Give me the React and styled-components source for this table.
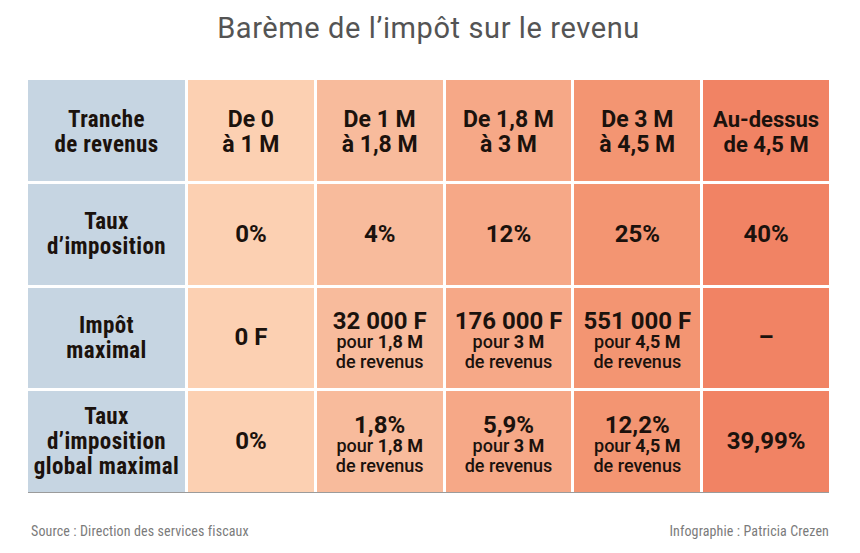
import React from 'react';
import styled, { createGlobalStyle } from 'styled-components';

const GlobalStyle = createGlobalStyle`
  body {
    margin: 0;
    background: #ffffff;
    font-family: "Roboto", "Liberation Sans", sans-serif;
  }
`;

const palette = ['#c6d5e2', '#fcd0b2', '#f8bb9c', '#f6a887', '#f39572', '#f18364'];

const Page = styled.div`
  width: 860px;
  height: 553px;
  box-sizing: border-box;
  padding: 11px 31px 0 28px;
  display: flex;
  flex-direction: column;
`;

const Title = styled.h1`
  margin: 0;
  font-family: "Roboto", sans-serif;
  font-size: 29px;
  line-height: 34px;
  font-weight: 400;
  color: #545454;
  text-align: center;
  letter-spacing: 0.6px;
`;

const Table = styled.div`
  margin-top: 35px;
  display: grid;
  grid-template-columns: 157px repeat(5, 1fr);
  grid-template-rows: repeat(4, 1fr);
  gap: 3px;
  height: 412px;
  border-bottom: 1px solid #9b9b9b;
`;

const Cell = styled.div`
  background: ${(p) => palette[p.$col]};
  display: flex;
  flex-direction: column;
  align-items: center;
  justify-content: center;
  text-align: center;
  color: #1b120d;
  padding-top: ${(p) => p.$shift || 0}px;
`;

const Label = styled.div`
  font-family: "Roboto Condensed", "Roboto", sans-serif;
  font-size: 23px;
  line-height: 25px;
  font-weight: 700;
  letter-spacing: 0.4px;
`;

const Main = styled.div`
  font-size: ${(p) => p.$size || 23}px;
  line-height: ${(p) => (p.$tight ? '22px' : '25px')};
  font-weight: 700;
`;

const Sub = styled.div`
  font-size: 18px;
  line-height: 20px;
  font-weight: 500;

  b {
    font-weight: 700;
  }
`;

const Footer = styled.div`
  margin-top: 30px;
  display: flex;
  justify-content: space-between;
  font-family: "Roboto Condensed", "Roboto", sans-serif;
  font-size: 14px;
  line-height: 16px;
  letter-spacing: 0.12px;
  color: #7b7b7b;
  padding-left: 3px;
`;

const rows = [
  {
    label: ['Tranche', 'de revenus'],
    shift: 4,
    cells: [
      { main: ['De 0', 'à 1 M'] },
      { main: ['De 1 M', 'à 1,8 M'] },
      { main: ['De 1,8 M', 'à 3 M'] },
      { main: ['De 3 M', 'à 4,5 M'] },
      { main: ['Au-dessus', 'de 4,5 M'], size: 22 },
    ],
  },
  {
    label: ['Taux', 'd’imposition'],
    shift: 0,
    cells: [
      { main: ['0%'], size: 24 },
      { main: ['4%'], size: 24 },
      { main: ['12%'], size: 24 },
      { main: ['25%'], size: 24 },
      { main: ['40%'], size: 24 },
    ],
  },
  {
    label: ['Impôt', 'maximal'],
    shift: 0,
    cells: [
      { main: ['0 F'], size: 24 },
      { main: ['32 000 F'], sub: '1,8 M', size: 24 },
      { main: ['176 000 F'], sub: '3 M', size: 24 },
      { main: ['551 000 F'], sub: '4,5 M', size: 24 },
      { main: ['–'], size: 24 },
    ],
  },
  {
    label: ['Taux', 'd’imposition', 'global maximal'],
    shift: 0,
    cells: [
      { main: ['0%'], size: 24 },
      { main: ['1,8%'], sub: '1,8 M', size: 24 },
      { main: ['5,9%'], sub: '3 M', size: 24 },
      { main: ['12,2%'], sub: '4,5 M', size: 24 },
      { main: ['39,99%'], size: 24 },
    ],
  },
];

function Lines({ lines }) {
  return lines.map((line, i) => (
    <React.Fragment key={i}>
      {i > 0 && <br />}
      {line}
    </React.Fragment>
  ));
}

function ValueCell({ col, cell, shift }) {
  return (
    <Cell $col={col} $shift={cell.sub ? 6 : shift}>
      <Main $tight={!!cell.sub} $size={cell.size}>
        <Lines lines={cell.main} />
      </Main>
      {cell.sub && (
        <Sub>
          pour <b>{cell.sub}</b>
          <br />
          de revenus
        </Sub>
      )}
    </Cell>
  );
}

export default function App() {
  return (
    <Page>
      <GlobalStyle />
      <Title>Barème de l’impôt sur le revenu</Title>
      <Table>
        {rows.map((row, r) => (
          <React.Fragment key={r}>
            <Cell $col={0} $shift={row.shift}>
              <Label>
                <Lines lines={row.label} />
              </Label>
            </Cell>
            {row.cells.map((cell, c) => (
              <ValueCell key={c} col={c + 1} cell={cell} shift={row.shift} />
            ))}
          </React.Fragment>
        ))}
      </Table>
      <Footer>
        <span>Source : Direction des services fiscaux</span>
        <span>Infographie : Patricia Crezen</span>
      </Footer>
    </Page>
  );
}
